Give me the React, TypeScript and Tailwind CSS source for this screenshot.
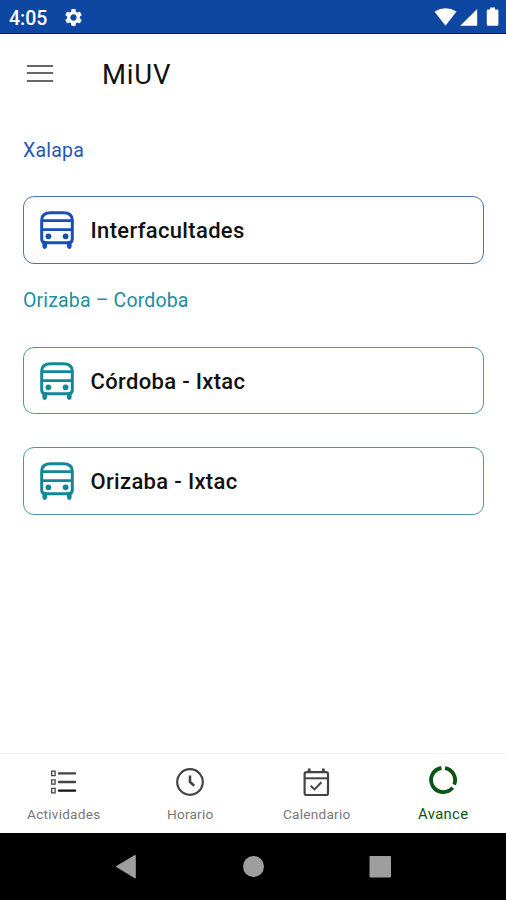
import type { ReactNode } from "react";
import { MdSettings } from "react-icons/md";

const BusIcon = ({ className }: { className: string }) => (
  <svg viewBox="0 0 34 38" fill="none" className={`h-[38px] w-[34px] shrink-0 ${className}`}>
    <path
      d="M1.7 28V9C1.7 4.5 4.5 1.7 11 1.7H23C29.5 1.7 32.3 4.5 32.3 9V28Q32.3 31.8 28.5 31.8H5.5Q1.7 31.8 1.7 28Z"
      stroke="currentColor"
      strokeWidth="3"
    />
    <path d="M2 9.6H32M2 18.6H32" stroke="currentColor" strokeWidth="2.6" />
    <circle cx="8.4" cy="25.3" r="2.9" fill="currentColor" />
    <circle cx="25.6" cy="25.3" r="2.9" fill="currentColor" />
    <path d="M4.7 32V35.6M29.3 32V35.6" stroke="currentColor" strokeWidth="4.6" strokeLinecap="round" />
  </svg>
);

const ListIcon = () => (
  <svg viewBox="0 0 28 28" fill="none" className="size-7">
    <path d="M2.7 3.2h3.4v4.4H2.7zM2.7 11.8h3.4v4.4H2.7zM2.7 20.4h3.4v4.4H2.7z" stroke="#444" strokeWidth="1.3" />
    <path d="M10 5.4H26M10 14H26" stroke="#444" strokeWidth="2.4" strokeLinecap="round" />
    <path d="M10 22.6H26" stroke="#111" strokeWidth="2.4" strokeLinecap="round" />
  </svg>
);

const ClockIcon = () => (
  <svg viewBox="0 0 28 28" fill="none" stroke="#444" className="size-7">
    <circle cx="14" cy="14" r="12.8" strokeWidth="2.2" />
    <path d="M14 7.6V14L18.2 17.8" strokeWidth="2.6" />
  </svg>
);

const CalendarIcon = () => (
  <svg viewBox="0 0 28 28" fill="none" stroke="#444" className="size-7">
    <rect x="2.6" y="4.2" width="23.4" height="23" rx="2" strokeWidth="2.2" />
    <path d="M2.6 10.3H26" strokeWidth="2" />
    <path d="M7.2 0.4V4M21.4 0.4V4" strokeWidth="2.8" />
    <path d="M8.7 17.8L12.5 21.4L19.4 14.2" strokeWidth="2" />
  </svg>
);

const ProgressIcon = () => (
  <svg viewBox="0 0 28 28" fill="none" stroke="#0b5412" strokeWidth="3.8" className="size-7">
    <path d="M16 2.1A12.1 12.1 0 0 1 25.2 18.6" />
    <path d="M23.6 21.6A12.1 12.1 0 1 1 12.4 2" />
  </svg>
);

const StatusBar = () => (
  <div className="flex h-[34px] items-center justify-between border-b border-[#08088c] bg-[#0d47a1] pr-[7px] pl-[9px] text-white">
    <div className="flex items-center gap-[14px]">
      <span className="w-[40px] pt-[4px] text-[19.5px] leading-none font-medium whitespace-nowrap">4:05</span>
      <MdSettings className="mt-[2px] size-[21px]" />
    </div>
    <svg viewBox="0 0 64 20" fill="currentColor" className="mt-px h-5 w-16">
      <path d="M-0.5 4.6Q10.5 -2 21.5 4.6L10.5 18.7Z" />
      <path d="M42.2 2V18.7H25.2Z" />
      <path d="M53 2.4h2.2V0.4h4.8v2h2.2q1.2 0 1.2 1.2v13.9q0 1.3-1.2 1.3h-9.2q-1.2 0-1.2-1.3v-13.9q0-1.2 1.2-1.2Z" />
    </svg>
  </div>
);

interface RouteCardProps {
  name: string;
  className: string;
  iconColor: string;
}

const RouteCard = ({ name, className, iconColor }: RouteCardProps) => (
  <button type="button" className={`flex w-full items-center rounded-[11px] border bg-white pl-[15.5px] ${className}`}>
    <BusIcon className={iconColor} />
    <span className="ml-[17px] pt-[2px] text-[22px] leading-none font-medium tracking-[0.33px] text-[#111]">
      {name}
    </span>
  </button>
);

const Tab = ({ label, active, children }: { label: string; active?: boolean; children: ReactNode }) => (
  <button
    type="button"
    className={`flex flex-1 flex-col items-center ${active ? "pt-[12px] text-[#0b5412]" : "pt-[14px] text-[#777]"}`}
  >
    {children}
    <span
      className={`pl-px leading-4 ${active ? "mt-[12px] text-[14.8px] tracking-[0.35px]" : "mt-[10px] text-[13.6px] tracking-[0.25px]"}`}
    >
      {label}
    </span>
  </button>
);

export default function App() {
  return (
    <div className="flex h-[900px] w-[506px] flex-col overflow-hidden bg-white font-[Roboto,sans-serif]">
      <StatusBar />

      <header className="flex h-[80px] items-center pl-[27px]">
        <div className="-mt-[2px] flex w-[26px] flex-col gap-[5.5px]">
          <span className="h-[2px] bg-[#666]" />
          <span className="h-[2px] bg-[#666]" />
          <span className="h-[2px] bg-[#666]" />
        </div>
        <h1 className="ml-[49px] pt-px text-[27.5px] leading-none tracking-[0.8px] text-[#111]">MiUV</h1>
      </header>

      <main className="flex-1 pt-[25px] pr-[22px] pl-[23px]">
        <h2 className="text-[19.5px] leading-6 tracking-[0.2px] text-[#2457b8]">Xalapa</h2>
        <div className="mt-[33px]">
          <RouteCard name="Interfacultades" className="h-[68px] border-[#4d70be]" iconColor="text-[#1550b5]" />
        </div>

        <h2 className="mt-[25px] text-[19.5px] leading-6 tracking-[0.15px] text-[#1d8f9f]">Orizaba – Cordoba</h2>
        <div className="mt-[34px] flex flex-col gap-[33px]">
          <RouteCard name="Córdoba - Ixtac" className="h-[67px] border-[#4b9ba4]" iconColor="text-[#128797]" />
          <RouteCard name="Orizaba - Ixtac" className="h-[68px] border-[#4b9ba4]" iconColor="text-[#128797]" />
        </div>
      </main>

      <nav className="flex h-[80px] border-t border-[#f1f1f1]">
        <Tab label="Actividades">
          <ListIcon />
        </Tab>
        <Tab label="Horario">
          <ClockIcon />
        </Tab>
        <Tab label="Calendario">
          <CalendarIcon />
        </Tab>
        <Tab label="Avance" active>
          <ProgressIcon />
        </Tab>
      </nav>

      <div className="flex h-[67px] items-center bg-black">
        <svg viewBox="0 0 506 67" fill="#9e9e9e" className="h-[67px] w-full">
          <path d="M115.5 33.5L134.8 22Q135.8 21.6 135.8 23V44.5Q135.8 45.9 134.8 45.3Z" />
          <circle cx="253.5" cy="33.5" r="10.5" />
          <rect x="369.5" y="23" width="21.5" height="21.5" rx="1" />
        </svg>
      </div>
    </div>
  );
}
